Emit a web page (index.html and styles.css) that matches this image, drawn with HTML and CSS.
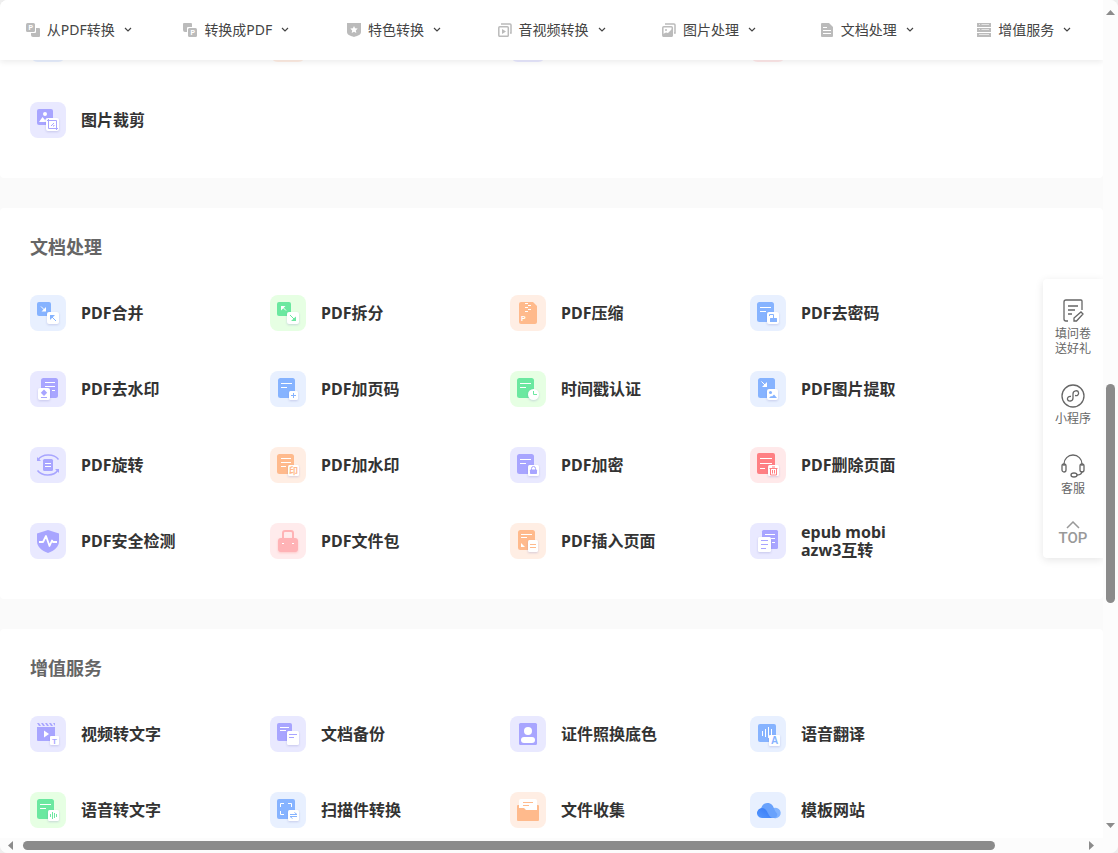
FILE: index.html
```html
<!DOCTYPE html>
<html lang="zh-CN">
<head>
<meta charset="utf-8">
<title>PDF转换</title>
<link rel="stylesheet" href="styles.css">
</head>
<body>
<div class="window">
  <div class="view">
    <header class="topbar">
      <nav class="menu">
        <button class="menu-item" type="button">
          <svg class="menu-icon" viewBox="0 0 14 14"><path d="M10 5h3a1 1 0 0 1 1 1v7a1 1 0 0 1-1 1H7a2 2 0 0 1-2-2v-2h4a1 1 0 0 0 1-1z"/><rect width="9" height="9" rx="1.5"/><text class="knock" x="2.500" y="7">P</text></svg>
          <span>从PDF转换</span><svg class="chevron" viewBox="0 0 8 6"><path d="M1 1l3 3 3-3"/></svg>
        </button>
        <button class="menu-item" type="button">
          <svg class="menu-icon" viewBox="0 0 14 14"><path d="M1 0h7a1 1 0 0 1 1 1v3H5a1 1 0 0 0-1 1v4H2a2 2 0 0 1-2-2V1a1 1 0 0 1 1-1z"/><rect x="5" y="5" width="9" height="9" rx="1.5"/><text class="knock" x="7.500" y="12">P</text></svg>
          <span>转换成PDF</span><svg class="chevron" viewBox="0 0 8 6"><path d="M1 1l3 3 3-3"/></svg>
        </button>
        <button class="menu-item" type="button">
          <svg class="menu-icon" viewBox="0 0 14 14"><path d="M0 0h14v9c0 3-4 4-7 5-3-1-7-2-7-5z"/><path fill="#fff" d="M7 3l1.1 2.300 2.600.3-1.900 1.800.5 2.500L7 8.700 4.700 9.900l.5-2.500-1.900-1.800 2.600-.3z"/></svg>
          <span>特色转换</span><svg class="chevron" viewBox="0 0 8 6"><path d="M1 1l3 3 3-3"/></svg>
        </button>
        <button class="menu-item" type="button">
          <svg class="menu-icon" viewBox="0 0 14 14"><path class="ring" d="M3 1h9a1 1 0 0 1 1 1v8h-1"/><rect class="ring" x=".8" y="3.800" width="9.500" height="9.500" rx="1"/><path d="M4 6l4 2.500L4 11z"/></svg>
          <span>音视频转换</span><svg class="chevron" viewBox="0 0 8 6"><path d="M1 1l3 3 3-3"/></svg>
        </button>
        <button class="menu-item" type="button">
          <svg class="menu-icon" viewBox="0 0 14 14"><path class="ring" d="M3 1h9a1 1 0 0 1 1 1v8h-1"/><rect class="ring" x=".8" y="3.800" width="9.500" height="9.500" rx="1"/><circle cx="4" cy="7" r="1"/><path d="M1 11l3-1.500 2 .5 4-4v7H1z"/></svg>
          <span>图片处理</span><svg class="chevron" viewBox="0 0 8 6"><path d="M1 1l3 3 3-3"/></svg>
        </button>
        <button class="menu-item" type="button">
          <svg class="menu-icon" viewBox="0 0 14 14"><path d="M2 0h7l4 4v9a1 1 0 0 1-1 1H2a1 1 0 0 1-1-1V1a1 1 0 0 1 1-1z"/><path class="cut" d="M3 4.500h4M3 7.500h8M3 10.500h8"/></svg>
          <span>文档处理</span><svg class="chevron" viewBox="0 0 8 6"><path d="M1 1l3 3 3-3"/></svg>
        </button>
        <button class="menu-item" type="button">
          <svg class="menu-icon" viewBox="0 0 14 14"><path d="M0 0h14v4H0zM0 5h14v4H0zM0 10h14v4H0z"/><path class="cut thin" d="M2 1.500h1M4.500 1.500H12M2 6.500h1M4.500 6.500H12M2 11.500h10"/></svg>
          <span>增值服务</span><svg class="chevron" viewBox="0 0 8 6"><path d="M1 1l3 3 3-3"/></svg>
        </button>
      </nav>
    </header>

    <main class="page">
      <section class="card card-first">
        <div class="tools">
          <div class="tile blue"></div><div class="tile orange"></div><div class="tile purple"></div><div class="tile red"></div>
          <a class="tool" href="#"><svg class="tile purple" viewBox="0 0 36 36"><rect x="7" y="7" width="16" height="16" rx="2"/><circle class="w" cx="15" cy="12" r="2"/><path class="w" d="M9 20l3.500-5 2.500 3 2-2 4 4z"/><rect class="chip" x="16" y="16" width="13" height="13" rx="2"/><path class="s" d="M18.500 17v9.500H28M17 18.500h9.500V28M21 24l3-3M23 24h1v-1"/></svg><span>图片裁剪</span></a>
        </div>
      </section>

      <section class="card">
        <h2>文档处理</h2>
        <div class="tools">
          <a class="tool" href="#"><svg class="tile blue" viewBox="0 0 36 36"><rect x="7" y="7" width="14" height="14" rx="2"/><path class="l" d="M11 11.500l4 4"/><path class="w" d="M16 12v4.500h-4.500z"/><rect class="chip" x="17" y="17" width="12" height="12" rx="2"/><path class="s" d="M26 26l-4-4"/><path d="M20 25v-5h5z"/></svg><span>PDF合并</span></a>
          <a class="tool" href="#"><svg class="tile green" viewBox="0 0 36 36"><rect x="7" y="7" width="14" height="14" rx="2"/><path class="l" d="M16 15.500l-4-4"/><path class="w" d="M11 15.500V11h4.500z"/><rect class="chip" x="17" y="17" width="12" height="12" rx="2"/><path class="s" d="M20 20l4 4"/><path d="M26 21.500V26h-5z"/></svg><span>PDF拆分</span></a>
          <a class="tool" href="#"><svg class="tile orange" viewBox="0 0 36 36"><path d="M11 7h12l4 4v16a2 2 0 0 1-2 2H11a2 2 0 0 1-2-2V9a2 2 0 0 1 2-2z"/><path class="l" d="M15 8.500h3M18 10.500h3M15 12.500h3M18 14.500h3M15 16.500h3"/><text class="w" x="11" y="26" font-size="7">P</text></svg><span>PDF压缩</span></a>
          <a class="tool" href="#"><svg class="tile blue" viewBox="0 0 36 36"><rect x="7" y="7" width="17" height="20" rx="2.500"/><path class="l" d="M10 12.500h11M10 16.500h6"/><rect class="chip" x="17" y="17" width="12" height="12" rx="2"/><rect x="20" y="23" width="7" height="4" rx=".5"/><path class="s" d="M19.500 21v-1.500h4V23"/></svg><span>PDF去密码</span></a>

          <a class="tool" href="#"><svg class="tile purple" viewBox="0 0 36 36"><rect x="11" y="7" width="17" height="20" rx="2.500"/><path class="l" d="M15 11.500h10M15 15.500h10M22 19.500h3"/><rect class="chip" x="8" y="17" width="12" height="12" rx="2"/><path d="M14 18.500l3.200 3.200-3.200 3.200-3.200-3.200z"/><path class="s" d="M11 26.500h6"/></svg><span>PDF去水印</span></a>
          <a class="tool" href="#"><svg class="tile blue" viewBox="0 0 36 36"><rect x="8" y="7" width="17" height="20" rx="2.500"/><path class="l" d="M11 12.500h11M11 16.500h6"/><rect class="chip" x="19" y="20" width="9" height="9" rx="1.500"/><path class="s" d="M21 24.500h5M23.500 22v5"/></svg><span>PDF加页码</span></a>
          <a class="tool" href="#"><svg class="tile green" viewBox="0 0 36 36"><rect x="7" y="7" width="17" height="20" rx="2.500"/><path class="l" d="M10 12.500h11M10 16.500h6"/><circle class="chip" cx="23.500" cy="23.500" r="5.500"/><path class="s" d="M23.500 20v3.500H27"/></svg><span>时间戳认证</span></a>
          <a class="tool" href="#"><svg class="tile blue" viewBox="0 0 36 36"><rect x="8" y="7" width="17" height="20" rx="2.500"/><path class="l" d="M11.500 10.500l4 4"/><path class="w" d="M17 11v5h-5z"/><rect class="chip" x="17" y="18" width="11" height="11" rx="2"/><circle cx="20.500" cy="21.500" r="1.500"/><path d="M19 27l2-2 1 .5 2-2 3 3.500z"/></svg><span>PDF图片提取</span></a>

          <a class="tool" href="#"><svg class="tile purple" viewBox="0 0 36 36"><rect x="13" y="12" width="10" height="12" rx="1.500"/><path class="l" d="M15 16.500h6M15 19.500h6"/><path class="arc" d="M8 13c4-6.500 16-6.500 20.500-.5M7.500 23.500c4.500 6 16.500 6 20.500-.5"/><path d="M7 10v4h4zM29 26v-4h-4z"/></svg><span>PDF旋转</span></a>
          <a class="tool" href="#"><svg class="tile orange" viewBox="0 0 36 36"><rect x="7" y="7" width="17" height="20" rx="2.500"/><path class="l" d="M11 11.500h10M11 15.500h10M11 19.500h5"/><rect class="chip" x="18" y="18" width="11" height="11" rx="1.500"/><text x="19" y="26.500" font-size="9">印</text></svg><span>PDF加水印</span></a>
          <a class="tool" href="#"><svg class="tile purple" viewBox="0 0 36 36"><rect x="7" y="7" width="17" height="20" rx="2.500"/><path class="l" d="M10 12.500h11M10 16.500h6"/><rect class="chip" x="18" y="18" width="11" height="11" rx="1.500"/><rect x="20" y="22.500" width="7" height="4.500" rx=".8"/><path class="s" d="M21.500 23v-1.500a2 2 0 0 1 4 0V23"/></svg><span>PDF加密</span></a>
          <a class="tool" href="#"><svg class="tile red" viewBox="0 0 36 36"><rect x="7" y="6" width="18" height="21" rx="2"/><path class="l" d="M10 11.500h12M10 16.500h12M10 21.500h5"/><rect class="chip" x="18" y="18" width="11" height="11" rx="1.500"/><path class="s" d="M19.500 21.500h8M22 20h3M20.500 21.500V28h6v-6.500M22.500 23v3.500M24.500 23v3.500"/></svg><span>PDF删除页面</span></a>

          <a class="tool" href="#"><svg class="tile purple" viewBox="0 0 36 36"><path d="M18 7l11 3.500V18c0 6-4.500 9.500-11 12-6.500-2.500-11-6-11-12v-7.500z"/><path class="pulse" d="M9 19h4l3-6 3.500 10 2.500-5.500 1 1.500h4"/></svg><span>PDF安全检测</span></a>
          <a class="tool" href="#"><svg class="tile pink" viewBox="0 0 36 36"><path class="grip" d="M13 16v-6a2 2 0 0 1 2-2h6a2 2 0 0 1 2 2v6"/><rect class="soft" x="8" y="15" width="20" height="14" rx="3"/><path class="l" d="M12 20.500h2M22 20.500h2"/></svg><span>PDF文件包</span></a>
          <a class="tool" href="#"><svg class="tile orange" viewBox="0 0 36 36"><rect x="8" y="7" width="17" height="20" rx="2.500"/><path class="l" d="M11 11.500h11M11 14.500h6"/><path class="w" d="M11 20v4h4z"/><rect class="chip" x="18" y="17" width="10" height="12" rx="1.500"/><path class="s" d="M20 21.500h6M20 24.500h6"/></svg><span>PDF插入页面</span></a>
          <a class="tool" href="#"><svg class="tile purple" viewBox="0 0 36 36"><rect x="12" y="7" width="16" height="19" rx="1.500"/><path class="l" d="M15 11.500h10M21 15.500h4M22 19.500h3"/><rect class="chip" x="8" y="14" width="13" height="15" rx="1.500"/><path class="s" d="M11 17.500h7M11 21.500h7M11 25.500h5"/></svg><span>epub mobi azw3互转</span></a>
        </div>
      </section>

      <section class="card">
        <h2>增值服务</h2>
        <div class="tools">
          <a class="tool" href="#"><svg class="tile purple" viewBox="0 0 36 36"><path d="M7 11h18v14H8a1 1 0 0 1-1-1zM7 7h2l2 3H9zM11 7h2l2 3h-2zM15 7h2l2 3h-2zM19 7h2l2 3h-2zM23 7h2v3z"/><path class="w" d="M14 14.500l5 3.500-5 3.500z"/><rect class="chip" x="20" y="20" width="9" height="9" rx="1"/><text x="22" y="27.500" font-size="8">T</text></svg><span>视频转文字</span></a>
          <a class="tool" href="#"><svg class="tile purple" viewBox="0 0 36 36"><rect x="7" y="7" width="15" height="18" rx="2"/><path class="l" d="M10 11.500h9M10 14.500h6"/><rect class="chip" x="17" y="15" width="12" height="14" rx="1.500"/><path class="s" d="M19 18.500h8M19 21.500h5"/></svg><span>文档备份</span></a>
          <a class="tool" href="#"><svg class="tile purple" viewBox="0 0 36 36"><rect x="9" y="7" width="18" height="22" rx="1.500"/><circle class="w" cx="18" cy="15" r="4"/><rect class="w" x="11" y="21" width="14" height="6" rx="3"/></svg><span>证件照换底色</span></a>
          <a class="tool" href="#"><svg class="tile blue" viewBox="0 0 36 36"><rect x="8" y="8" width="18" height="18" rx="2"/><path class="l" d="M12.500 15v5M15.500 13v8M18.500 11v11M21.500 13v8"/><rect class="chip" x="19" y="19" width="11" height="11" rx="1"/><text x="21" y="28" font-size="10">A</text></svg><span>语音翻译</span></a>

          <a class="tool" href="#"><svg class="tile green" viewBox="0 0 36 36"><rect x="7" y="7" width="17" height="20" rx="2.500"/><path class="l" d="M10 12.500h11M10 16.500h6"/><rect class="chip" x="18" y="18" width="11" height="11" rx="1.500"/><path class="s" d="M20.500 22v3M22.500 20v7M24.500 21v5M26.500 22v3"/></svg><span>语音转文字</span></a>
          <a class="tool" href="#"><svg class="tile blue" viewBox="0 0 36 36"><rect x="7" y="7" width="18" height="20" rx="2"/><path class="l" d="M10.500 15v-3.500H14M18 11.500h3.500V15M10.500 19v3.500H14"/><rect class="chip" x="18" y="18" width="11" height="11" rx="1.500"/><path class="s" d="M20 22.500h7l-2.500-2M27 24.500h-7l2.500 2"/></svg><span>扫描件转换</span></a>
          <a class="tool" href="#"><svg class="tile orange" viewBox="0 0 36 36"><path d="M7 14a1 1 0 0 1 1-1h20a1 1 0 0 1 1 1v6H7z"/><path class="w" d="M9 9a2 2 0 0 1 2-2h14a2 2 0 0 1 2 2v10H9z"/><path class="s" d="M13 10.500h10M13 13.500h6"/><path d="M7 18a2 2 0 0 1 2-2h5l2 2h12a1 1 0 0 1 1 1v9a1 1 0 0 1-1 1H8a1 1 0 0 1-1-1z"/></svg><span>文件收集</span></a>
          <a class="tool" href="#"><svg class="tile blue" viewBox="0 0 36 36"><defs><linearGradient id="deep" x1="0" y1="1" x2="1" y2="0"><stop offset="0" stop-color="#5698ff"/><stop offset="1" stop-color="#3377f5"/></linearGradient></defs><path fill="#82b4ff" d="M19 26l3-9a5 5 0 0 1 5-1 5 5 0 0 1-3 10z"/><path fill="#69a2fc" d="M11 17c1-5 5-7 9-5.500 4 1.500 4 7 7 10 1 2-1 4.500-3 4.500h-8z"/><path fill="url(#deep)" d="M12 26a5 5 0 1 1 3-9c3 2 3 7 7 9z"/></svg><span>模板网站</span></a>
        </div>
      </section>
    </main>

    <aside class="side">
      <a class="side-item" href="#"><svg class="side-icon" viewBox="0 0 24 24"><path d="M7 22H5a2 2 0 0 1-2-2V3a2 2 0 0 1 2-2h15a1 1 0 0 1 1 1v9M7 7h10M7 11h7M7 15h4M13 22v-3l7-6 2 2-6.500 7z"/></svg><span>填问卷<br>送好礼</span></a>
      <a class="side-item" href="#"><svg class="side-icon" viewBox="0 0 24 24"><circle cx="12" cy="12" r="11"/><path d="M10 12.500c-2-.5-4 1-3.500 3 .5 2 5.500 2.500 5.500-1.500V10c0-4 5-4 5.500-1.500.5 2-1 3.500-3.500 3"/></svg><span>小程序</span></a>
      <a class="side-item" href="#"><svg class="side-icon" viewBox="0 0 24 24"><path d="M3 12v-2a9 9 0 0 1 18 0v2M21 17c0 3-2 4-5 4"/><rect x="1" y="10" width="4" height="8" rx="2"/><rect x="19" y="10" width="4" height="8" rx="2"/><ellipse cx="13" cy="21" rx="3" ry="2"/></svg><span>客服</span></a>
      <a class="side-item side-top" href="#"><svg class="side-arrow" viewBox="0 0 14 8"><path d="M1 7l6-6 6 6"/></svg><span>TOP</span></a>
    </aside>
  </div>

  <div class="bar bar-y"><i class="tri up"></i><i class="y-before"></i><i class="thumb y-thumb"></i><i class="y-after"></i><i class="tri down"></i></div>
  <div class="bar bar-x"><i class="tri left"></i><i class="x-before"></i><i class="thumb x-thumb"></i><i class="x-after"></i><i class="tri right"></i></div>
  <div class="bar"></div>
</div>
</body>
</html>
```
FILE: styles.css
```css
* { box-sizing: border-box; }

body {
  margin: 0;
  background: #eee;
  color: #333;
  font-family: "Noto Sans", "Noto Sans CJK SC", sans-serif;
}

a { color: inherit; text-decoration: none; }

.window {
  display: grid;
  grid-template: minmax(0, 1fr) 15px / minmax(0, 1fr) 15px;
  height: 100vh;
  overflow: hidden;
  border-radius: 8px;
  background: #fcfcfc;
}

.view { position: relative; overflow: hidden; background: #fafafa; }

/* Top menu, floating over the page */
.topbar {
  position: absolute;
  inset: 0 0 auto;
  z-index: 2;
  background: #fff;
  box-shadow: 0 2px 6px rgba(0, 0, 0, .08);
}
.menu { display: flex; height: 60px; }
.menu-item {
  flex: 1 1 0;
  display: flex;
  align-items: center;
  justify-content: center;
  padding: 0;
  border: 0;
  background: none;
  color: #444;
  font: 14px/20px "Noto Sans", "Noto Sans CJK SC", sans-serif;
  white-space: nowrap;
}
.menu-icon { width: 14px; height: 14px; margin-right: 7px; fill: #bbb; }
.menu-icon .knock { fill: #fff; font: bold 7px Roboto, sans-serif; }
.menu-icon .ring { fill: none; stroke: #bbb; stroke-width: 1.5; }
.menu-icon .cut { fill: none; stroke: #fff; }
.menu-icon .thin { opacity: .6; }
.chevron { width: 8px; height: 6px; margin-left: 9px; fill: none; stroke: #444; stroke-width: 1.2; }

/* Sections */
.page { display: flex; flex-direction: column; gap: 30px; }
.card { padding: 26px 30px 40px; border-radius: 4px; background: #fff; }
.card h2 { margin: 0 0 35px; color: #666; font-size: 18px; line-height: 26px; }
.tools { display: grid; grid-template-columns: repeat(4, 240px); row-gap: 40px; }
.tool {
  display: flex;
  align-items: center;
  gap: 15px;
  height: 36px;
  padding-right: 80px;
  font-size: 16px;
  font-weight: bold;
  line-height: 18px;
}

/* Icon tiles */
.tile { flex: none; width: 36px; height: 36px; border-radius: 8px; fill: currentColor; }
.tile text { font-family: "Liberation Sans", "Noto Sans CJK SC", sans-serif; font-weight: bold; }
.blue { color: #86b3ff; background: #e8f0ff; }
.purple { color: #a8a5ff; background: #e9e9ff; }
.green { color: #6be8a0; background: #e6ffe3; }
.orange { color: #ffba8c; background: #ffeee4; }
.red { color: #ff7f83; background: #ffe9ea; }
.pink { color: #ffb3b6; background: #ffebec; }
.w { fill: #fff; }
.l { fill: none; stroke: #fff; }
.s { fill: none; stroke: currentColor; }
.arc { fill: none; stroke: currentColor; stroke-width: 1.5; }
.grip { fill: none; stroke: currentColor; stroke-width: 2; }
.pulse { fill: none; stroke: #fff; stroke-width: 1.8; stroke-linejoin: round; }
.chip { fill: #fff; filter: drop-shadow(0 1px 1px rgba(100, 100, 180, .25)); }
.soft { filter: drop-shadow(0 1px 1px rgba(255, 120, 120, .3)); }

/* Floating shortcuts */
.side {
  position: absolute;
  top: 279px;
  right: 0;
  z-index: 1;
  display: flex;
  flex-direction: column;
  gap: 28px;
  width: 60px;
  padding: 20px 0 12px;
  border-radius: 4px 0 0 4px;
  background: #fff;
  box-shadow: 0 2px 8px rgba(0, 0, 0, .1);
}
.side-item {
  display: flex;
  flex-direction: column;
  align-items: center;
  gap: 3px;
  color: #666;
  font-size: 12px;
  line-height: 15px;
  text-align: center;
}
.side-icon { width: 24px; height: 24px; fill: none; stroke: #666; stroke-width: 1.3; }
.side-top { gap: 1px; margin-top: -3px; color: #999; font: 500 15px/16px Roboto, sans-serif; }
.side-arrow { width: 14px; height: 8px; fill: none; stroke: #999; stroke-width: 1.5; }

/* Scroll bars */
.bar { display: flex; align-items: center; background: #fcfcfc; }
.bar-y { flex-direction: column; padding: 10px 0; }
.bar-x { padding: 0 9px 0 8px; }
.thumb { border-radius: 5px; background: #8b8b8b; }
.y-thumb { flex: 219 0 0; width: 9px; }
.y-before { flex: 369 0 0; }
.y-after { flex: 220 0 0; }
.x-thumb { flex: 972 0 0; height: 9px; }
.x-before { flex: 10 0 0; }
.x-after { flex: 94 0 0; }
.tri { background: #8b8b8b; }
.up, .down { width: 9px; height: 5px; }
.left, .right { width: 5px; height: 9px; }
.up { clip-path: polygon(50% 0, 100% 100%, 0 100%); }
.down { clip-path: polygon(0 0, 100% 0, 50% 100%); }
.left { clip-path: polygon(100% 0, 100% 100%, 0 50%); }
.right { clip-path: polygon(0 0, 100% 50%, 0 100%); }
```
